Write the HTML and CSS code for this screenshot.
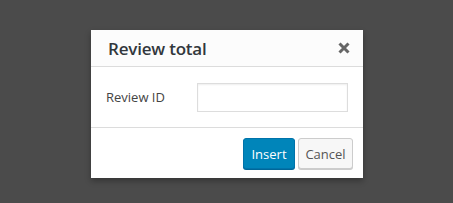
FILE: index.html
```html
<!DOCTYPE html>
<html>
<head>
<meta charset="utf-8">
<link rel="stylesheet" href="styles.css">
</head>
<body>
<div class="dialog">
  <div class="header">
    <span class="title">Review total</span>
    <svg class="close" width="12" height="12" viewBox="0 0 12 12"><path d="M1.5 1.5 L10.5 10.5 M10.5 1.5 L1.5 10.5" stroke="#666" stroke-width="3" stroke-linecap="butt"/></svg>
  </div>
  <div class="body">
    <label class="label">Review ID</label>
    <input class="field" type="text">
  </div>
  <div class="footer">
    <button class="btn primary">Insert</button>
    <button class="btn secondary">Cancel</button>
  </div>
</div>
</body>
</html>
```
FILE: styles.css
```css
html, body { margin: 0; padding: 0; }
body {
  background: #4b4b4b;
  width: 453px;
  height: 203px;
  padding: 30px 0 0 91px;
  box-sizing: border-box;
  font-family: "Open Sans", "Noto Sans", sans-serif;
}
.dialog {
  width: 272px;
  height: 148px;
  background: #fff;
  box-shadow: 0 3px 6px rgba(0,0,0,0.3);
  display: flex;
  flex-direction: column;
}
.header {
  height: 36px;
  background: #fcfcfc;
  border-bottom: 1px solid #dcdcdc;
  display: flex;
  align-items: center;
  justify-content: space-between;
  padding: 0 13px 0 17px;
}
.title {
  font-size: 17px;
  font-weight: 600;
  color: #32373c;
  letter-spacing: -0.2px;
}
.close { display: block; }
.body {
  height: 60px;
  border-bottom: 1px solid #dcdcdc;
  display: flex;
  align-items: center;
  padding: 0 15px 0 15px;
}
.label {
  font-size: 13px;
  color: #444;
  width: 91px;
}
.field {
  width: 151px;
  height: 29px;
  box-sizing: border-box;
  border: 1px solid #ddd;
  box-shadow: inset 0 1px 2px rgba(0,0,0,0.07);
  margin: 0;
  padding: 0 6px;
  outline: none;
}
.footer {
  flex: 1;
  display: flex;
  justify-content: flex-end;
  align-items: flex-start;
  gap: 3px;
  padding: 10px 10px 0 0;
}
.btn {
  height: 31px;
  box-sizing: border-box;
  border-radius: 3px;
  font-family: "Open Sans", "Noto Sans", sans-serif;
  font-size: 13px;
  padding: 0;
  margin: 0;
  cursor: pointer;
}
.primary {
  width: 52px;
  background: #0085ba;
  border: 1px solid #0073aa;
  color: #fff;
  box-shadow: 0 1px 0 #006799;
}
.secondary {
  width: 55px;
  background: #f7f7f7;
  border: 1px solid #ccc;
  color: #555;
  box-shadow: 0 1px 0 #ccc;
}
```
